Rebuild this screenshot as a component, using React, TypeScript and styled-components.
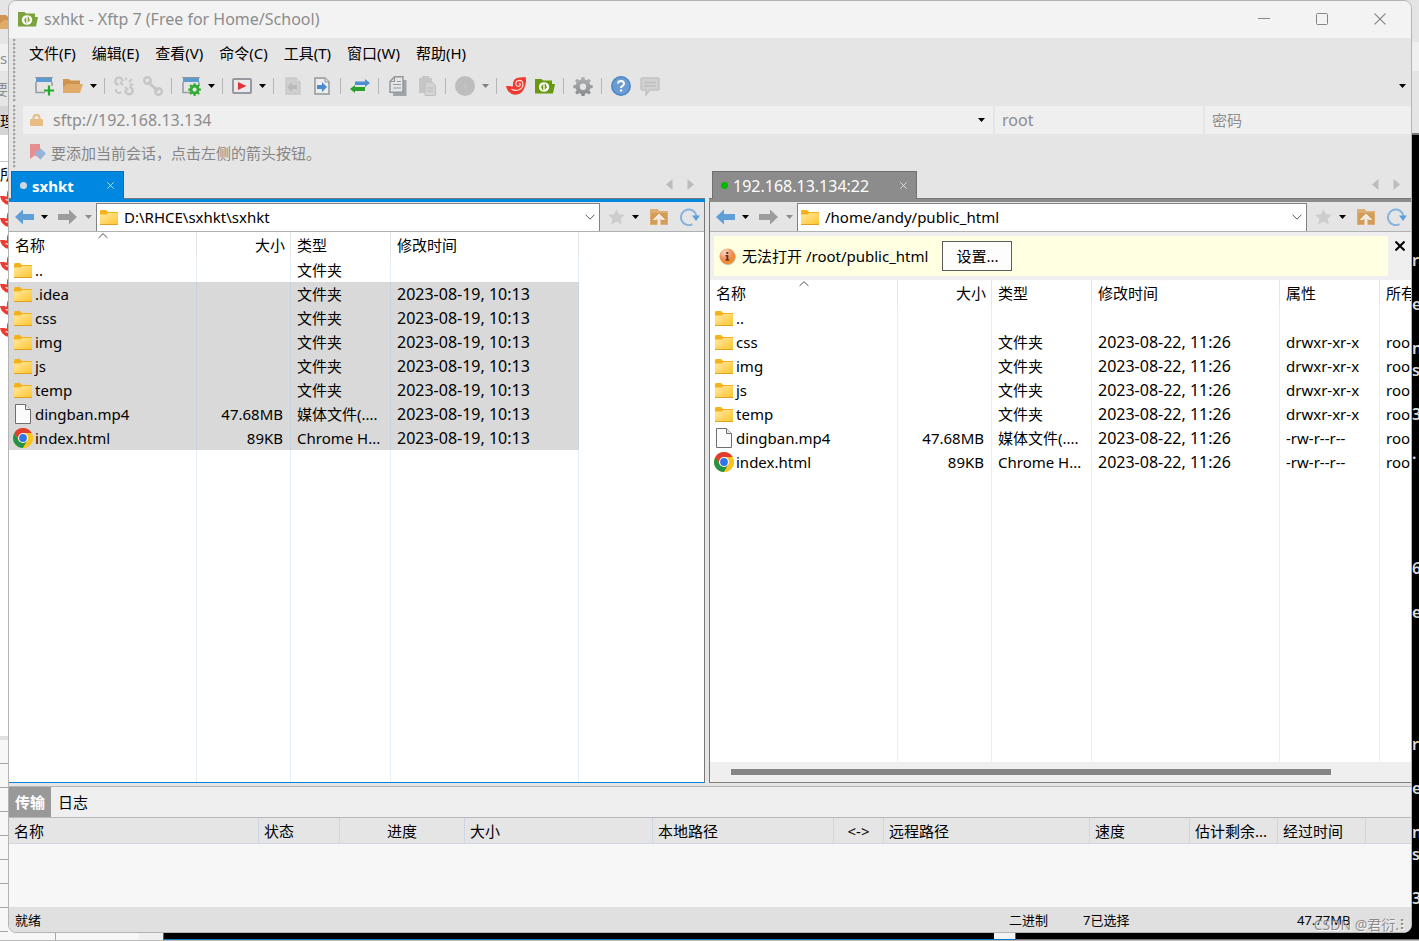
import React from "react";
import styled, { createGlobalStyle, css } from "styled-components";

const Global = createGlobalStyle`
  * { box-sizing: border-box; }
  html, body, #root { height: 100%; margin: 0; }
  body {
    overflow: hidden;
    background: #fff;
    color: #000;
    font: 15px/20px "Noto Sans", "Noto Sans CJK SC", sans-serif;
  }
  button, input { font: inherit; color: inherit; margin: 0; padding: 0; border: 0; background: none; }
  svg { display: block; flex: none; }
`;

/* ---------- desktop behind the window ---------- */

const Desktop = styled.div`
  display: grid;
  grid-template: minmax(0, 1fr) 8px / 8px minmax(0, 1fr) 7px;
  height: 100vh;
  background: linear-gradient(#e5e5e5 50%, transparent 50%), linear-gradient(90deg, #f7f7f7 50%, #000 50%);
`;

const LeftStrip = styled.div`
  display: flex;
  flex-direction: column;
  overflow: hidden;
  background: #fff;
`;

const StripCell = styled.div<{ $h: number; $bg: string; $color?: string; $line?: boolean; $end?: boolean }>`
  display: flex;
  flex: none;
  align-items: center;
  justify-content: ${(p) => (p.$end ? "flex-end" : "flex-start")};
  height: ${(p) => p.$h}px;
  background: ${(p) => p.$bg};
  color: ${(p) => p.$color || "#000"};
  border-bottom: ${(p) => (p.$line ? "1px solid #c8c8c8" : "0")};
`;

const StripGrid = styled.div`
  height: 197px;
  margin-top: auto;
  border-top: 4px solid #e0e0e0;
  background: repeating-linear-gradient(#f7f7f7 0 23px, #a8a8a8 23px 24px);
`;

const RightStrip = styled.div`
  display: flex;
  flex-direction: column;
  overflow: hidden;
  background: #000;
`;

const Terminal = styled.pre`
  margin: 0;
  padding-top: 114px;
  border-top: 2px solid #777;
  color: #ddd;
  font: 600 16px/22px "Noto Sans", sans-serif;
`;

const BottomStrip = styled.div`
  grid-column: 1 / -1;
  display: flex;
  background: #000;
  border-bottom: 1px solid #bbb;
`;

const BottomPiece = styled.div<{ $w?: number; $bg: string; $edge?: string; $under?: string }>`
  flex: ${(p) => (p.$w ? "none" : "1")};
  width: ${(p) => (p.$w ? p.$w + "px" : "auto")};
  background: ${(p) => p.$bg};
  border-right: ${(p) => (p.$edge ? "1px solid " + p.$edge : "0")};
  border-bottom: ${(p) => (p.$under ? "1px solid " + p.$under : "0")};
`;

/* ---------- window ---------- */

const Window = styled.main`
  position: relative;
  display: flex;
  flex-direction: column;
  min-width: 0;
  overflow: hidden;
  background: #e5e5e5;
  border: 1px solid #b4b4b4;
  border-radius: 8px;
`;

const TitleBar = styled.header`
  display: flex;
  align-items: center;
  flex: none;
  height: 37px;
  padding: 0 2px 2px 9px;
  background: #f3f3f3;
  color: #8c8c8c;
`;

const Title = styled.h1`
  flex: 1;
  margin: 0 0 0 6px;
  font-size: 16px;
  font-weight: 400;
`;

const CaptionButton = styled.button`
  display: grid;
  place-items: center;
  width: 58px;
  height: 34px;
  color: #858585;
`;

const Chrome = styled.div`
  display: flex;
  flex: none;
`;

const Grippers = styled.div`
  display: flex;
  flex-direction: column;
  gap: 3px;
  width: 14px;
  padding: 1px 0 3px 4px;
`;

const Gripper = styled.div`
  flex: 1;
  width: 3px;
  background: radial-gradient(circle at 1px 1px, #a2a2a2 1px, #f4f4f4 2px, transparent 2px) 0 0 / 3px 4px;
`;

const Bars = styled.div`
  flex: 1;
  min-width: 0;
`;

const MenuBar = styled.nav`
  display: flex;
  height: 31px;
  padding: 0 0 2px 2px;
`;

const MenuItem = styled.button`
  padding: 0 4px;
  margin-right: 8px;
  white-space: nowrap;
`;

const ToolBar = styled.div`
  display: flex;
  align-items: center;
  height: 34px;
  margin-bottom: 3px;
  padding: 0 2px 0 6px;
`;

const IconButton = styled.button<{ $w?: number }>`
  display: grid;
  place-items: center;
  flex: none;
  width: ${(p) => p.$w || 29}px;
  height: 28px;
`;

const Separator = styled.span`
  flex: none;
  width: 1px;
  height: 16px;
  margin: 0 4px;
  background: #b5b5b5;
`;

const Spacer = styled.span`
  flex: 1;
`;

const AddressRow = styled.form`
  display: flex;
  gap: 2px;
  height: 28px;
  color: #8c8c8c;
  font-size: 16px;
`;

const Field = styled.label<{ $w?: number }>`
  display: flex;
  align-items: center;
  flex: ${(p) => (p.$w ? `0 0 ${p.$w}px` : "1")};
  gap: 10px;
  min-width: 0;
  padding: 0 4px 0 7px;
  background: #efefef;
`;

const TextInput = styled.input`
  flex: 1;
  min-width: 0;
  width: 0;
  height: 20px;
  margin-bottom: 1px;
  outline: 0;
  &::placeholder { color: #8c8c8c; font-size: 15px; opacity: 1; }
`;

const Hint = styled.p`
  display: flex;
  align-items: center;
  gap: 5px;
  height: 37px;
  margin: 0;
  padding: 0 0 0 6px;
  color: #858585;
`;

/* ---------- file panes ---------- */

const Panes = styled.div`
  display: grid;
  flex: 1;
  min-height: 0;
  grid-template-columns: minmax(0, 696fr) minmax(0, 702fr);
  column-gap: 4px;
  margin-bottom: 3px;
`;

const Pane = styled.section`
  display: flex;
  flex-direction: column;
  min-width: 0;
  min-height: 0;
`;

const TabStrip = styled.div<{ $active?: boolean }>`
  display: flex;
  flex: none;
  height: 31px;
  padding-left: ${(p) => (p.$active ? 2 : 3)}px;
  border-bottom: 3px solid ${(p) => (p.$active ? "#0088e0" : "#8c8c8c")};
  box-shadow: inset 0 -1px #777;
`;

const Tab = styled.div<{ $active?: boolean }>`
  display: flex;
  align-items: center;
  width: ${(p) => (p.$active ? 113 : 205)}px;
  padding: 0 6px 0 8px;
  border: 1px solid ${(p) => (p.$active ? "#0a6fb8" : "#707070")};
  border-bottom: 0;
  background: ${(p) => (p.$active ? "#0088e0" : "#8c8c8c")};
  color: #fff;
  font-size: ${(p) => (p.$active ? 15 : 16)}px;
  font-weight: ${(p) => (p.$active ? 700 : 400)};
`;

const TabDot = styled.span<{ $color: string }>`
  width: 7px;
  height: 7px;
  margin-right: 5px;
  border-radius: 50%;
  background: ${(p) => p.$color};
`;

const TabLabel = styled.button`
  flex: 1;
  text-align: left;
`;

const PaneBody = styled.div<{ $active?: boolean }>`
  display: flex;
  flex: 1;
  flex-direction: column;
  min-height: 0;
  overflow: hidden;
  background: #fff;
  ${(p) =>
    p.$active
      ? css`border-right: 1px solid #777; border-bottom: 1px solid #0a84d0;`
      : css`border-left: 1px solid #777; border-bottom: 1px solid #808080;`}
`;

const PathBar = styled.div`
  display: flex;
  align-items: center;
  flex: none;
  height: 30px;
  padding-left: 4px;
  background: #e5e5e5;
  border-bottom: 1px solid #b0b0b0;
`;

const PathField = styled.label`
  display: flex;
  align-items: center;
  flex: 1;
  gap: 6px;
  min-width: 0;
  height: 28px;
  margin: 1px 3px 0 2px;
  padding: 0 4px 1px 3px;
  background: #fff;
  border: 1px solid #828282;
  border-bottom: 0;
`;

const Notice = styled.div`
  display: flex;
  flex: none;
  height: 48px;
  padding: 4px 0 4px 4px;
  background: #efefef;
`;

const NoticeText = styled.div`
  display: flex;
  align-items: center;
  flex: 1;
  gap: 6px;
  padding-left: 5px;
  background: #ffffe1;
`;

const SettingsButton = styled.button`
  width: 70px;
  height: 30px;
  margin-left: 8px;
  background: #fdfdfd;
  border: 1px solid #5e5e5e;
`;

const NoticeClose = styled.button`
  align-self: flex-start;
  display: grid;
  place-items: center;
  width: 23px;
  height: 19px;
`;

const TableWrap = styled.div`
  flex: 1;
  min-height: 0;
  overflow: hidden;
`;

const FileTable = styled.table`
  width: 100%;
  height: 100%;
  table-layout: fixed;
  border-collapse: separate;
  border-spacing: 0;
`;

const HeadCell = styled.th<{ $right?: boolean }>`
  position: relative;
  height: 26px;
  padding: 0 5px 0 6px;
  overflow: hidden;
  border-right: 1px solid #e5e5e5;
  font-weight: 400;
  text-align: ${(p) => (p.$right ? "right" : "left")};
  white-space: nowrap;
  &:last-child { border-right: 0; }
`;

const SortMark = styled.span`
  position: absolute;
  top: 1px;
  right: 0;
  left: 0;
  display: grid;
  justify-content: center;
`;

const Cell = styled.td<{ $right?: boolean; $selected?: boolean; $date?: boolean }>`
  height: 24px;
  padding: 0 7px 0 6px;
  overflow: hidden;
  border-right: 1px solid ${(p) => (p.$selected ? "#c6d2e0" : "#e6eff8")};
  background: ${(p) => (p.$selected ? "#d9d9d9" : "transparent")};
  font-size: ${(p) => (p.$date ? 16 : 15)}px;
  text-align: ${(p) => (p.$right ? "right" : "left")};
  white-space: nowrap;
  &:last-child { border-right: 0; background: none; }
`;

const NameCell = styled(Cell)`
  padding: 0 0 0 4px;
`;

const FillerCell = styled(Cell)`
  height: auto;
`;

const FileName = styled.span`
  display: flex;
  align-items: center;
  gap: 2px;
  & > svg { width: 20px; }
`;

const ScrollTrack = styled.div`
  flex: none;
  height: 20px;
  padding: 7px 80px 7px 21px;
  background: #efefef;
`;

const ScrollThumb = styled.div`
  height: 6px;
  background: #858585;
`;

/* ---------- transfer panel ---------- */

const Dock = styled.section`
  flex: none;
  border-top: 1px solid #b4b4b4;
  background: #f7f7f7;
`;

const DockTabs = styled.div`
  display: flex;
  height: 31px;
  background: #efefef;
  border-bottom: 1px solid #b8b8b8;
`;

const DockTab = styled.button<{ $active?: boolean }>`
  padding: 0 ${(p) => (p.$active ? 6 : 7)}px;
  background: ${(p) => (p.$active ? "#999" : "transparent")};
  color: ${(p) => (p.$active ? "#fff" : "#000")};
  font-weight: ${(p) => (p.$active ? 700 : 400)};
`;

const TransferArea = styled.div`
  height: 89px;
`;

const TransferTable = styled.table`
  width: 100%;
  table-layout: fixed;
  border-collapse: separate;
  border-spacing: 0;
`;

const TransferHead = styled.th<{ $center?: boolean }>`
  height: 26px;
  padding: 0 0 0 ${(p) => (p.$center ? 0 : 5)}px;
  border-right: 1px solid #d0d6e4;
  border-bottom: 1px solid #d0d6e4;
  background: #e5e5e5;
  font-weight: 400;
  text-align: ${(p) => (p.$center ? "center" : "left")};
  white-space: nowrap;
  &:last-child { border-right: 0; }
`;

const StatusBar = styled.footer`
  display: flex;
  align-items: center;
  flex: none;
  height: 25px;
  padding: 1px 0 0 6px;
  background: #e0e0e0;
  font-size: 13px;
`;

const StatusCell = styled.span<{ $w?: number }>`
  flex: ${(p) => (p.$w ? `0 0 ${p.$w}px` : "1")};
`;

const Watermark = styled.span`
  position: absolute;
  right: 2px;
  bottom: -3px;
  color: rgba(110, 110, 110, 0.75);
  font-size: 14px;
  text-shadow: 1px 1px 0 rgba(255, 255, 255, 0.7);
  white-space: nowrap;
`;

/* ---------- icons ---------- */

const Caret = ({ color = "#000" }: { color?: string }) => (
  <svg width="7" height="4" viewBox="0 0 7 4"><path d="M0 0h7L3.500 4z" fill={color} /></svg>
);

const Arrow = ({ color, flip }: { color: string; flip?: boolean }) => (
  <svg width="20" height="16" viewBox="0 0 20 16">
    <path d={flip ? "M20 8 12 .5V5H1v6h11v4.500z" : "M0 8 8 .5V5h11v6H8v4.500z"} fill={color} />
  </svg>
);

const NavTriangles = () => (
  <svg width="28" height="12" viewBox="0 0 28 12">
    <path d="M6.500 0v11L0 5.500zM21.500 0v11L28 5.500z" fill="#bcbcbc" />
  </svg>
);

const Folder = () => (
  <svg width="18" height="15" viewBox="0 0 18 15">
    <defs>
      <linearGradient id="folderFill" x1="0" y1="0" x2="1" y2="1">
        <stop offset="0" stopColor="#ffe9a2" />
        <stop offset="1" stopColor="#ffc631" />
      </linearGradient>
    </defs>
    <path d="M0 1.500Q0 0 1.200 0H6l2 2h10v3H0z" fill="#f7b21a" />
    <path d="M0 4.500h6.500l2-1.500H18v11H0z" fill="url(#folderFill)" />
    <path d="M0 14h18v1H0z" fill="#e0a21c" />
  </svg>
);

const FileDoc = () => (
  <svg width="16" height="20" viewBox="0 0 16 20">
    <path d="M.5.5h10l5 5v14H.5z" fill="#fbfbfb" stroke="#6f6f6f" />
    <path d="M10.500.5v5h5" fill="#e8e8e8" stroke="#6f6f6f" />
  </svg>
);

const ChromeLogo = () => (
  <svg width="20" height="20" viewBox="0 0 20 20">
    <circle cx="10" cy="10" r="10" fill="#fcc31e" />
    <path d="M10 5h8.660A10 10 0 0 0 1.340 5l4.330 7.500z" fill="#e33b2e" />
    <path d="M1.340 5A10 10 0 0 0 10 20l4.330-7.500L10 15l-4.330-2.500z" fill="#229344" />
    <path d="M14.330 12.500 10 20A10 10 0 0 0 18.660 5H10z" fill="#fcc31e" />
    <circle cx="10" cy="10" r="5" fill="#fff" />
    <circle cx="10" cy="10" r="3.900" fill="#2f74e8" />
  </svg>
);

const XftpLogo = ({ color }: { color: string }) => (
  <svg width="20" height="16" viewBox="0 0 20 16">
    <path d="M0 1h6.500L8 2.500h9V6h3l-2 9.500H0z" fill={color} />
    <ellipse cx="9" cy="9" rx="5.200" ry="4.800" fill="#fff" />
    <path d="M8.300 13V6L5.500 9.500h1.300V11zM9.700 5v7l2.800-3.500h-1.300V7z" fill={color} />
  </svg>
);

const WindowShape = () => (
  <>
    <path d="M2 2h16v4H2z" fill="#5b9bd0" />
    <path d="M2 6v10.500h9M18 6v4" fill="none" stroke="#9a9ea2" strokeWidth="1.600" />
    <path d="M1.200 1.500h17.600" stroke="#8d9399" strokeWidth="1" />
  </>
);

const NewSession = () => (
  <svg width="20" height="20" viewBox="0 0 20 20">
    <WindowShape />
    <path d="M15 9.500v10M10 14.500h10" stroke="#22ac2a" strokeWidth="2.200" />
  </svg>
);

const gearPath =
  "M8.600 1h2.800l.5 2.500 1.800.8 2.200-1.500 2 2-1.500 2.200.8 1.800 2.500.5v2.800l-2.500.5-.8 1.800 1.500 2.200-2 2-2.200-1.500-1.800.8-.5 2.500H8.600l-.5-2.500-1.800-.8-2.200 1.500-2-2 1.500-2.200-.8-1.800-2.500-.5V9.300l2.500-.5.8-1.800-1.500-2.200 2-2 2.200 1.500 1.800-.8zM10 7.500a3.200 3.200 0 1 0 0 6.400 3.200 3.200 0 0 0 0-6.400z";

const SessionProps = () => (
  <svg width="20" height="20" viewBox="0 0 20 20">
    <WindowShape />
    <g transform="translate(7 6.500) scale(.66)">
      <path d={gearPath} fill="#35ac36" fillRule="evenodd" />
    </g>
  </svg>
);

const Gear = () => (
  <svg width="20" height="20" viewBox="0 0 20 20">
    <defs>
      <linearGradient id="gearFill" x1="0" y1="0" x2="0" y2="1">
        <stop offset="0" stopColor="#b0b2b4" />
        <stop offset="1" stopColor="#868a8e" />
      </linearGradient>
    </defs>
    <path d={gearPath} fill="url(#gearFill)" fillRule="evenodd" />
  </svg>
);

const OpenFolder = () => (
  <svg width="20" height="16" viewBox="0 0 20 16">
    <path d="M0 1h6l1.500 1.500H17V6H5L1 15H0z" fill="#cf9450" />
    <path d="M4 6h16l-3 9H0V9z" fill="#e0aa68" />
  </svg>
);

const Links = ({ broken }: { broken?: boolean }) => (
  <svg width="20" height="20" viewBox="0 0 20 20" fill="none" stroke="#c6c6c6" strokeWidth="2.400">
    {broken ? (
      <>
        <path d="M8.500 5.500A3.600 3.600 0 1 0 4.500 8.800M6 6l3 3M11.500 14a3.600 3.600 0 1 0 4-3M14 14l-3-3" />
        <path d="M2 13a3 3 0 0 0 5 3M12.500 1.500l-1 3M18 3l-3 3M19 8.500h-3.500" strokeWidth="1.800" />
      </>
    ) : (
      <>
        <circle cx="4.500" cy="4.500" r="3.300" />
        <circle cx="15.500" cy="15.500" r="3.300" />
        <path d="M5 6l10 9" strokeWidth="3" />
      </>
    )}
  </svg>
);

const PlayScript = () => (
  <svg width="20" height="16" viewBox="0 0 20 16">
    <rect x="1" y="1" width="18" height="14" rx="1" fill="#e8eaec" stroke="#969a9e" strokeWidth="2" />
    <path d="M6 4v8l8.500-4z" fill="#e0343a" />
  </svg>
);

const DocArrow = ({ active }: { active?: boolean }) => (
  <svg width="16" height="18" viewBox="0 0 16 18">
    <path
      d="M1 1h10l4 4v12H1z"
      fill={active ? "#ececec" : "#cfcfcf"}
      stroke={active ? "#94989c" : "#cacaca"}
      strokeWidth="1.500"
    />
    <path d="M11 1v4h4" fill="#ddd" stroke={active ? "#94989c" : "#c4c4c4"} />
    {active ? (
      <path d="M13 10 8 5v3H3v4h5v3z" fill="#4a8ad0" />
    ) : (
      <path d="M2 10l5-5v3h5v4H7v3z" fill="#bababa" />
    )}
  </svg>
);

const Sync = () => (
  <svg width="20" height="14" viewBox="0 0 20 14">
    <path d="M20 4 15 0v2.500H5V6h10v2z" fill="#4f8ed2" />
    <path d="M0 10l5-4v2h10v4H5v2z" fill="#2ca02c" />
  </svg>
);

const CopyDocs = () => (
  <svg width="18" height="20" viewBox="0 0 18 20">
    <path d="M4 4h13.500v16H4z" fill="#9fa4a8" />
    <path d="M5.500.8H14v15.400H1V5.500z" fill="#e6e6e6" stroke="#94999e" strokeWidth="1.500" />
    <path d="M5.500 1v4.500H1M4 8.500h8M4 12h8M8 5.500h4" fill="none" stroke="#94999e" strokeWidth="1.200" />
  </svg>
);

const PasteDocs = () => (
  <svg width="18" height="20" viewBox="0 0 18 20">
    <path d="M1 2h3V0h7v2h3v15H1z" fill="#c6c6c6" />
    <path d="M7 6h7l3.500 3.500V19.500H7z" fill="#d3d3d3" stroke="#c0c0c0" />
    <path d="M9 12h6M9 15h6" stroke="#bdbdbd" />
  </svg>
);

const Disc = () => (
  <svg width="20" height="20" viewBox="0 0 20 20">
    <circle cx="10" cy="10" r="10" fill="#bdbdbd" />
    <path d="M10 5v6h3" fill="none" stroke="#c4c4c4" strokeWidth="1.500" />
  </svg>
);

const Shell = () => (
  <svg width="20" height="18" viewBox="0 0 20 18">
    <path d="M0 9h4.500q1.500 1.500 2.500 0Q6.500 5 8.500 2.500 11 .3 14 .5L19.500 0Q20.500 3 19.500 7.500 18.500 12 16 15q-3 3-7 2.800-4-.3-6.500-3.300Q.5 12 0 9z" fill="#ef3a30" />
    <path
      d="M5.500 12.200q3 1.800 7 .8 4.500-1.500 4.500-6-.4-3.600-3.700-3.600-3.600.4-3.500 3.600.5 2.600 2.800 2.300 2-.6 1.600-2.200-.5-1-1.300-.5"
      fill="none"
      stroke="#fbdcd8"
      strokeWidth="1.200"
    />
  </svg>
);

const Help = () => (
  <svg width="20" height="20" viewBox="0 0 20 20">
    <circle cx="10" cy="10" r="9.200" fill="#6a9bd2" stroke="#4c84c4" strokeWidth="1.500" />
    <path d="M7 7.500Q7.200 5 10 5t3 2.500q0 1.500-1.500 2.300T10 12" fill="none" stroke="#fff" strokeWidth="2" />
    <path d="M9 13.500h2.200v2H9z" fill="#fff" />
  </svg>
);

const Chat = () => (
  <svg width="20" height="19" viewBox="0 0 20 19">
    <path d="M2 1h16q1 0 1 1v10q0 1-1 1H9.500L6 18v-5H2q-1 0-1-1V2q0-1 1-1z" fill="#d0d0d0" stroke="#c2c2c2" strokeWidth="1.500" />
    <path d="M4 5.500h12M4 9h12" stroke="#bfbfbf" strokeWidth="1.500" />
  </svg>
);

const Lock = () => (
  <svg width="13" height="12" viewBox="0 0 13 12">
    <path d="M3.500 6V3.500a3 2.600 0 0 1 6 0V6" fill="none" stroke="#e8bd84" strokeWidth="2" />
    <rect y="5" width="13" height="7" rx="1" fill="#e8bd84" />
  </svg>
);

const Bookmark = () => (
  <svg width="17" height="17" viewBox="0 0 17 17">
    <path d="M1 0h10v15l-4.500-4L1 15z" fill="#e58f90" />
    <path d="M17 9.500l-6-5.500v3H6v5h5v4z" fill="#93b4dc" />
  </svg>
);

const Star = () => (
  <svg width="17" height="16" viewBox="0 0 17 16">
    <path d="M8.500 0l2.500 5.200 5.800.6-4.300 4 1.300 5.700-5.300-3-5.300 3 1.300-5.700-4.300-4 5.800-.6z" fill="#cdcdcd" />
  </svg>
);

const FolderUp = () => (
  <svg width="18" height="16" viewBox="0 0 18 16">
    <path d="M0 0h8l1 2h9v14H0z" fill="#dcae74" />
    <path d="M1 4h16v11H1z" fill="#d39c58" />
    <path d="M9 5l5.500 5.500h-2L10 9.500V16H8V9.500l-2.500 1h-2z" fill="#f1eae0" stroke="#f1eae0" />
  </svg>
);

const Refresh = () => (
  <svg width="20" height="18" viewBox="0 0 20 18">
    <path d="M12.500 16.200A7.800 7.800 0 1 1 16.500 8" fill="none" stroke="#85b3de" strokeWidth="2" />
    <path d="M12 7.500h8L16 13z" fill="#5f9fd8" />
  </svg>
);

const Chevron = ({ up }: { up?: boolean }) => (
  <svg width="10" height="6" viewBox="0 0 10 6">
    <path d={up ? "M.5 5 5 .7 9.500 5" : "M.5.7 5 5.200 9.500.7"} fill="none" stroke="#555" />
  </svg>
);

const Cross = ({ size, color, width = 1 }: { size: number; color: string; width?: number }) => (
  <svg width={size} height={size} viewBox="0 0 10 10">
    <path d="M.5.5l9 9M9.500.5l-9 9" fill="none" stroke={color} strokeWidth={width} />
  </svg>
);

const InfoBall = () => (
  <svg width="17" height="17" viewBox="0 0 17 17">
    <defs>
      <radialGradient id="ball" cx=".35" cy=".25" r=".8">
        <stop offset="0" stopColor="#ffd9c8" />
        <stop offset=".55" stopColor="#f0905c" />
        <stop offset="1" stopColor="#f08a10" />
      </radialGradient>
    </defs>
    <circle cx="9" cy="9.200" r="7.800" fill="#c9b9a8" />
    <circle cx="8.300" cy="8.300" r="7.800" fill="url(#ball)" />
    <path d="M7.300 4h2v2h-2zM6.500 7h2.800v4.500h1v1.200H6.500v-1.200h.9V8.200h-.9z" fill="#6a3010" />
  </svg>
);

/* ---------- data ---------- */

type Kind = "folder" | "file" | "chrome";
type Entry = { name: string; kind: Kind; size?: string; type?: string; time?: string; attrs?: string; owner?: string };

const withKind = (name: string): [string, Kind, string, string] =>
  name === "dingban.mp4"
    ? [name, "file", "47.68MB", "媒体文件(...."]
    : name === "index.html"
      ? [name, "chrome", "89KB", "Chrome H..."]
      : [name, "folder", "", "文件夹"];

const makeEntry = (time: string, remote: boolean) => (n: string): Entry => {
  const [name, kind, size, type] = withKind(n);
  const attrs = remote ? (kind === "folder" ? "drwxr-xr-x" : "-rw-r--r--") : undefined;
  return { name, kind, size, type, time, attrs, owner: remote ? "roo" : undefined };
};

const localFiles: Entry[] = [
  { name: "..", kind: "folder", type: "文件夹" },
  ...[".idea", "css", "img", "js", "temp", "dingban.mp4", "index.html"].map(makeEntry("2023-08-19, 10:13", false)),
];

const remoteFiles: Entry[] = [
  { name: "..", kind: "folder" },
  ...["css", "img", "js", "temp", "dingban.mp4", "index.html"].map(makeEntry("2023-08-22, 11:26", true)),
];

const transferColumns: { label: string; width?: number; center?: boolean }[] = [
  { label: "名称", width: 250 },
  { label: "状态", width: 81 },
  { label: "进度", width: 125, center: true },
  { label: "大小", width: 188 },
  { label: "本地路径", width: 181 },
  { label: "<->", width: 50, center: true },
  { label: "远程路径", width: 206 },
  { label: "速度", width: 100 },
  { label: "估计剩余...", width: 88 },
  { label: "经过时间", width: 88 },
  { label: "" },
];

const menus = ["文件(F)", "编辑(E)", "查看(V)", "命令(C)", "工具(T)", "窗口(W)", "帮助(H)"];

const kindIcon = { folder: <Folder />, file: <FileDoc />, chrome: <ChromeLogo /> };

/* ---------- parts ---------- */

const Tool = ({ label, children }: { label: string; children: React.ReactNode }) => (
  <IconButton type="button" aria-label={label}>{children}</IconButton>
);

const Drop = ({ color, w = 13 }: { color?: string; w?: number }) => (
  <IconButton type="button" $w={w} aria-label="更多"><Caret color={color} /></IconButton>
);

const Files = ({ entries, remote }: { entries: Entry[]; remote?: boolean }) => (
  <TableWrap>
    <FileTable>
      <colgroup>
        <col style={{ width: 188 }} />
        <col style={{ width: 94 }} />
        <col style={{ width: 100 }} />
        <col style={{ width: 188 }} />
        {remote && <col style={{ width: 100 }} />}
        <col />
      </colgroup>
      <thead>
        <tr>
          <HeadCell>名称<SortMark><Chevron up /></SortMark></HeadCell>
          <HeadCell $right>大小</HeadCell>
          <HeadCell>类型</HeadCell>
          <HeadCell>修改时间</HeadCell>
          {remote && <HeadCell>属性</HeadCell>}
          <HeadCell>{remote ? "所有" : ""}</HeadCell>
        </tr>
      </thead>
      <tbody>
        {entries.map((e) => {
          const sel = !remote && e.name !== "..";
          return (
            <tr key={e.name}>
              <NameCell $selected={sel}><FileName>{kindIcon[e.kind]}{e.name}</FileName></NameCell>
              <Cell $selected={sel} $right>{e.size}</Cell>
              <Cell $selected={sel}>{e.type}</Cell>
              <Cell $selected={sel} $date>{e.time}</Cell>
              {remote && <Cell>{e.attrs}</Cell>}
              <Cell>{e.owner}</Cell>
            </tr>
          );
        })}
        <tr aria-hidden="true">
          <FillerCell /><FillerCell /><FillerCell /><FillerCell />
          {remote && <FillerCell />}
          <FillerCell />
        </tr>
      </tbody>
    </FileTable>
  </TableWrap>
);

const FilePane = ({ active, title, path, children }: { active?: boolean; title: string; path: string; children: React.ReactNode }) => (
  <Pane>
    <TabStrip $active={active}>
      <Tab $active={active}>
        <TabDot $color={active ? "#d0d8de" : "#00b800"} />
        <TabLabel type="button">{title}</TabLabel>
        <IconButton type="button" $w={14} aria-label="关闭标签"><Cross size={7} color="#fff" /></IconButton>
      </Tab>
      <Spacer />
      <IconButton type="button" $w={50} aria-label="切换标签"><NavTriangles /></IconButton>
    </TabStrip>
    <PaneBody $active={active}>
      <PathBar>
        <IconButton type="button" $w={24} aria-label="后退"><Arrow color="#5f9fd8" /></IconButton>
        <Drop w={15} />
        <IconButton type="button" $w={30} aria-label="前进"><Arrow color="#9c9c9c" flip /></IconButton>
        <Drop color="#8c8c8c" w={12} />
        <PathField>
          <Folder />
          <TextInput aria-label="路径" defaultValue={path} />
          <IconButton type="button" $w={11} aria-label="展开路径"><Chevron /></IconButton>
        </PathField>
        <IconButton type="button" $w={26} aria-label="收藏"><Star /></IconButton>
        <Drop />
        <IconButton type="button" $w={33} aria-label="上级目录"><FolderUp /></IconButton>
        <IconButton type="button" $w={29} aria-label="刷新"><Refresh /></IconButton>
      </PathBar>
      {children}
    </PaneBody>
  </Pane>
);

const terminalText = "r\n\ne\n\nn\ns\n\n3\n\n·\n\n\n\n\n6\n\ne\n\n\n\n\n\nr\n\ne\n\nn\ns\n\n3";

export default function App() {
  return (
    <>
      <Global />
      <Desktop>
        <LeftStrip aria-hidden="true">
          <StripCell $h={44} $bg="#e5e5e5"><OpenFolder /></StripCell>
          <StripCell $h={27} $bg="#f0f0f0" $color="#8c8c8c">s</StripCell>
          <StripCell $h={35} $bg="#e5e5e5" $color="#8c8c8c" $end>要</StripCell>
          <StripCell $h={29} $bg="#d5d5d5">理</StripCell>
          <StripCell $h={27} $bg="#fff" $line />
          <StripCell $h={23} $bg="#fff">所</StripCell>
          {[0, 1, 2, 3, 4, 5, 6].map((i) => (
            <StripCell key={i} $h={22} $bg="#fff"><Shell /></StripCell>
          ))}
          <StripGrid />
        </LeftStrip>

        <Window>
          <TitleBar>
            <XftpLogo color="#7ba23c" />
            <Title>sxhkt - Xftp 7 (Free for Home/School)</Title>
            <CaptionButton type="button" aria-label="最小化">
              <svg width="12" height="2" viewBox="0 0 12 2"><path d="M0 .5h12" stroke="currentColor" /></svg>
            </CaptionButton>
            <CaptionButton type="button" aria-label="最大化">
              <svg width="12" height="12" viewBox="0 0 12 12"><rect x=".5" y=".5" width="11" height="11" rx="1" fill="none" stroke="currentColor" /></svg>
            </CaptionButton>
            <CaptionButton type="button" aria-label="关闭"><Cross size={12} color="currentColor" /></CaptionButton>
          </TitleBar>

          <Chrome>
            <Grippers><Gripper /><Gripper /></Grippers>
            <Bars>
              <MenuBar>{menus.map((m) => <MenuItem key={m} type="button">{m}</MenuItem>)}</MenuBar>
              <ToolBar>
                <Tool label="新建会话"><NewSession /></Tool>
                <Tool label="打开"><OpenFolder /></Tool>
                <Drop />
                <Separator />
                <Tool label="断开"><Links broken /></Tool>
                <Tool label="重新连接"><Links /></Tool>
                <Separator />
                <Tool label="会话属性"><SessionProps /></Tool>
                <Drop />
                <Separator />
                <Tool label="运行"><PlayScript /></Tool>
                <Drop />
                <Separator />
                <Tool label="向左传输"><DocArrow /></Tool>
                <Tool label="向右传输"><DocArrow active /></Tool>
                <Separator />
                <Tool label="同步"><Sync /></Tool>
                <Separator />
                <Tool label="复制"><CopyDocs /></Tool>
                <Tool label="粘贴"><PasteDocs /></Tool>
                <Separator />
                <Tool label="历史"><Disc /></Tool>
                <Drop color="#808080" />
                <Separator />
                <Tool label="Xshell"><Shell /></Tool>
                <Tool label="Xftp"><XftpLogo color="#68990c" /></Tool>
                <Separator />
                <Tool label="选项"><Gear /></Tool>
                <Separator />
                <Tool label="帮助"><Help /></Tool>
                <Tool label="反馈"><Chat /></Tool>
                <Spacer />
                <Drop />
              </ToolBar>
              <AddressRow>
                <Field>
                  <Lock />
                  <TextInput aria-label="主机" defaultValue="sftp://192.168.13.134" />
                  <Drop w={16} />
                </Field>
                <Field $w={208}><TextInput aria-label="用户名" defaultValue="root" /></Field>
                <Field $w={206}><TextInput type="password" aria-label="密码" placeholder="密码" /></Field>
              </AddressRow>
              <Hint><Bookmark />要添加当前会话，点击左侧的箭头按钮。</Hint>
            </Bars>
          </Chrome>

          <Panes>
            <FilePane active title="sxhkt" path="D:\RHCE\sxhkt\sxhkt">
              <Files entries={localFiles} />
            </FilePane>
            <FilePane title="192.168.13.134:22" path="/home/andy/public_html">
              <Notice role="alert">
                <NoticeText>
                  <InfoBall />
                  <span>无法打开 /root/public_html</span>
                  <SettingsButton type="button">设置...</SettingsButton>
                </NoticeText>
                <NoticeClose type="button" aria-label="关闭提示"><Cross size={10} color="#000" width={2} /></NoticeClose>
              </Notice>
              <Files entries={remoteFiles} remote />
              <ScrollTrack><ScrollThumb /></ScrollTrack>
            </FilePane>
          </Panes>

          <Dock>
            <DockTabs>
              <DockTab type="button" $active>传输</DockTab>
              <DockTab type="button">日志</DockTab>
            </DockTabs>
            <TransferArea>
              <TransferTable>
                <colgroup>
                  {transferColumns.map((c, i) => <col key={i} style={{ width: c.width }} />)}
                </colgroup>
                <thead>
                  <tr>{transferColumns.map((c, i) => <TransferHead key={i} $center={c.center}>{c.label}</TransferHead>)}</tr>
                </thead>
              </TransferTable>
            </TransferArea>
          </Dock>

          <StatusBar>
            <StatusCell>就绪</StatusCell>
            <StatusCell $w={74}>二进制</StatusCell>
            <StatusCell $w={214}>7已选择</StatusCell>
            <StatusCell $w={114}>47.77MB</StatusCell>
          </StatusBar>
          <Watermark>CSDN @君衍.⠇</Watermark>
        </Window>

        <RightStrip aria-hidden="true">
          <StripCell $h={42} $bg="#e5e5e5" />
          <StripCell $h={29} $bg="#f0f0f0" />
          <StripCell $h={62} $bg="#e5e5e5" />
          <Terminal>{terminalText}</Terminal>
        </RightStrip>

        <BottomStrip aria-hidden="true">
          <BottomPiece $w={56} $bg="#f7f7f7" $edge="#a8a8a8" />
          <BottomPiece $w={83} $bg="#f7f7f7" />
          <BottomPiece $w={25} $bg="#efefef" $edge="#0a78c0" />
          <BottomPiece $bg="#000" $under="#0a78c0" />
          <BottomPiece $w={22} $bg="#f3f3f3" $edge="#0a78c0" $under="#0a78c0" />
          <BottomPiece $w={403} $bg="#000" $under="#777" />
        </BottomStrip>
      </Desktop>
    </>
  );
}
